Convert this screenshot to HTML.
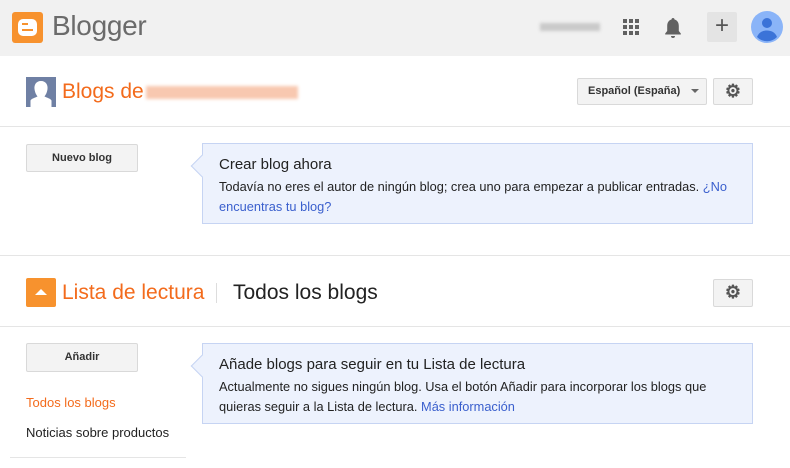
<!DOCTYPE html>
<html><head><meta charset="utf-8"><style>
*{margin:0;padding:0;box-sizing:border-box}
body{width:790px;height:468px;overflow:hidden;background:#fff;font-family:"Liberation Sans",Arial,sans-serif;position:relative}
.a{position:absolute}
.hdr{left:0;top:0;width:790px;height:56px;background:#f1f1f1}
.btn{position:absolute;background:#f3f3f3;border:1px solid #d9d9d9;border-radius:2px;font-size:11px;font-weight:bold;color:#333;text-align:center}
.hr{position:absolute;height:1px;background:#e5e5e5}
.box{position:absolute;background:#edf2fd;border:1px solid #c6d4f3}
.box h3{font-weight:normal;font-size:15px;color:#222;margin:12px 0 0 16px}
.box p{font-size:12.8px;color:#222;margin:4px 8px 0 16px;line-height:20px}
.box a{color:#3a5fcd;text-decoration:none}
.arr{position:absolute;left:-9px;top:14px;width:16px;height:16px;background:#edf2fd;border-left:1px solid #c6d4f3;border-bottom:1px solid #c6d4f3;transform:rotate(45deg)}
.or{color:#f36b1c}
</style></head><body>
<div class="a hdr"></div>
<div class="a" style="left:12px;top:12px;width:31px;height:31px;background:#f7922e;border-radius:3px"></div>
<div class="a" style="left:18px;top:19px;width:19px;height:17px;background:#fff;border-radius:5px"></div>
<div class="a" style="left:22px;top:29px;width:11px;height:2px;background:#f7922e"></div>
<div class="a" style="left:22px;top:23px;width:6px;height:2px;background:#f7922e"></div>
<div class="a" style="left:52px;top:10px;font-size:28px;color:#6b6b6b;letter-spacing:-0.3px">Blogger</div>
<div class="a" style="left:540px;top:23px;width:60px;height:8px;background:#c9c9c9;filter:blur(1.5px)"></div>
<svg class="a" style="left:623px;top:19px" width="18" height="18"><g fill="#616161"><rect x="0" y="0" width="4" height="4"/><rect x="6" y="0" width="4" height="4"/><rect x="12" y="0" width="4" height="4"/><rect x="0" y="6" width="4" height="4"/><rect x="6" y="6" width="4" height="4"/><rect x="12" y="6" width="4" height="4"/><rect x="0" y="12" width="4" height="4"/><rect x="6" y="12" width="4" height="4"/><rect x="12" y="12" width="4" height="4"/></g></svg>
<svg class="a" style="left:664px;top:17px" width="18" height="22"><path d="M9 1c1 0 1.5.7 1.5 1.5 3 .8 4.3 3.3 4.3 6.5v5l2 2.5v1H1.2v-1l2-2.5V9c0-3.2 1.3-5.7 4.3-6.5C7.5 1.7 8 1 9 1z M7 19h4a2 2 0 0 1-4 0z" fill="#616161"/></svg>
<div class="a" style="left:707px;top:12px;width:30px;height:30px;background:#e4e4e4;border-radius:2px;text-align:center;font-size:24px;line-height:28px;color:#555">+</div>
<svg class="a" style="left:751px;top:11px" width="32" height="32"><circle cx="16" cy="16" r="16" fill="#8ab4f8"/><circle cx="16" cy="12" r="5" fill="#3b73d8"/><path d="M6 26c2-5 6-6.5 10-6.5s8 1.5 10 6.5a14 14 0 0 1-20 0z" fill="#3b73d8"/></svg>

<svg class="a" style="left:26px;top:77px" width="30" height="30"><rect width="30" height="30" fill="#6f80a4"/><path d="M15 4c5 0 7 4 6.5 8s-2 6-3 7.5c3 1.5 6 2 7 4V30H4.5V23.5c1-2 4-2.5 7-4-1-1.5-2.5-3.5-3-7.5S10 4 15 4z" fill="#fff"/></svg>
<div class="a or" style="left:62px;top:80px;font-size:21px">Blogs de</div>
<div class="a" style="left:146px;top:86px;width:152px;height:13px;background:#f8c8b0;filter:blur(1.5px)"></div>
<div class="btn" style="left:577px;top:78px;width:130px;height:27px;line-height:25px;text-align:left;padding-left:10px">Español (España) <span style="display:inline-block;margin-left:8px;border-left:4px solid transparent;border-right:4px solid transparent;border-top:4px solid #666;vertical-align:middle"></span></div>
<div class="btn" style="left:713px;top:78px;width:40px;height:27px;font-size:18px;line-height:24px;color:#555">⚙</div>
<div class="hr" style="left:0;top:126px;width:790px"></div>
<div class="btn" style="left:26px;top:144px;width:112px;height:28px;line-height:26px">Nuevo blog</div>
<div class="box" style="left:202px;top:143px;width:551px;height:81px"><div class="arr"></div><h3>Crear blog ahora</h3><p>Todavía no eres el autor de ningún blog; crea uno para empezar a publicar entradas. <a>¿No encuentras tu blog?</a></p></div>
<div class="hr" style="left:0;top:255px;width:790px"></div>

<div class="a" style="left:26px;top:278px;width:30px;height:29px;background:#f7922e;border-radius:2px"></div>
<div class="a" style="left:35px;top:289px;border-left:6px solid transparent;border-right:6px solid transparent;border-bottom:6px solid #fff"></div>
<div class="a or" style="left:62px;top:281px;font-size:21px">Lista de lectura</div>
<div class="a" style="left:216px;top:283px;width:1px;height:20px;background:#ddd"></div>
<div class="a" style="left:233px;top:281px;font-size:21px;color:#222">Todos los blogs</div>
<div class="btn" style="left:713px;top:279px;width:40px;height:28px;font-size:18px;line-height:25px;color:#555">⚙</div>
<div class="hr" style="left:0;top:326px;width:790px"></div>
<div class="btn" style="left:26px;top:343px;width:112px;height:29px;line-height:27px">Añadir</div>
<div class="box" style="left:202px;top:343px;width:551px;height:81px"><div class="arr"></div><h3>Añade blogs para seguir en tu Lista de lectura</h3><p>Actualmente no sigues ningún blog. Usa el botón Añadir para incorporar los blogs que<br>quieras seguir a la Lista de lectura. <a>Más información</a></p></div>
<div class="a or" style="left:26px;top:395px;font-size:13px">Todos los blogs</div>
<div class="a" style="left:26px;top:425px;font-size:13px;color:#222">Noticias sobre productos</div>
<div class="hr" style="left:10px;top:457px;width:176px"></div>
</body></html>
